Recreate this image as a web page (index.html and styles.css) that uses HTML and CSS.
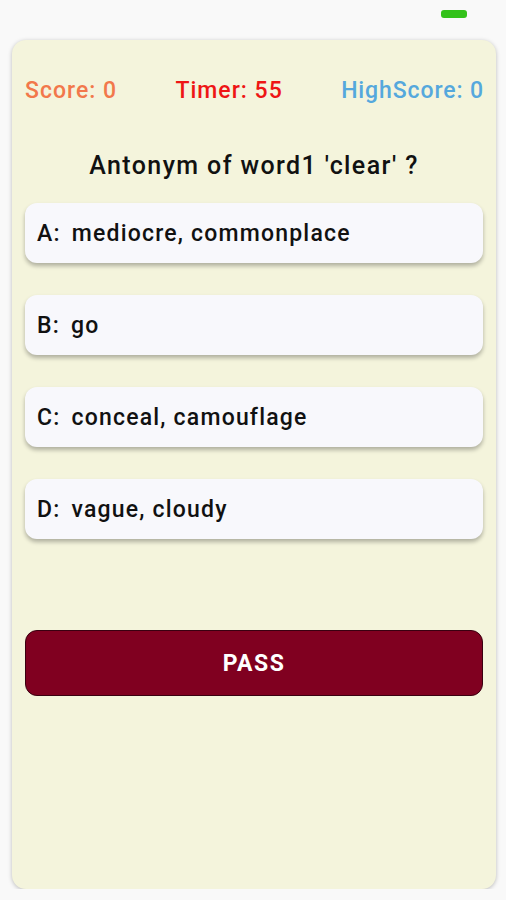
FILE: index.html
```html
<!DOCTYPE html>
<html lang="en">
<head>
    <meta charset="UTF-8">
    <meta name="viewport" content="width=device-width, initial-scale=1.0">
    <title>Antonym Quiz</title>
    <link rel="stylesheet" href="styles.css">
</head>
<body>
    <div class="status-bar">
        <span class="battery"></span>
    </div>

    <div class="card">
        <div class="score-row">
            <span class="score">Score: 0</span>
            <span class="timer">Timer: 55</span>
            <span class="high-score">HighScore: 0</span>
        </div>

        <h2 class="question">Antonym of word1 'clear' ?</h2>

        <div class="options">
            <button class="option"><span class="letter">A:</span>mediocre, commonplace</button>
            <button class="option"><span class="letter">B:</span>go</button>
            <button class="option"><span class="letter">C:</span>conceal, camouflage</button>
            <button class="option"><span class="letter">D:</span>vague, cloudy</button>
        </div>

        <button class="pass">PASS</button>
    </div>
</body>
</html>
```

FILE: styles.css
```css
body {
    font-family: Roboto, "Noto Sans", Arial, sans-serif;
    background-color: #f9f9f9;
    margin: 0;
    padding: 0;
}
.status-bar {
    height: 40px;
    display: flex;
    justify-content: flex-end;
    padding-right: 39px;
    box-sizing: border-box;
}
.battery {
    width: 26px;
    height: 8px;
    margin-top: 10px;
    border-radius: 3px;
    background-color: #33c21a;
}
.card {
    margin: 0 10px 0 12px;
    height: 849px;
    box-sizing: border-box;
    padding: 36px 13px 0;
    background-color: #f4f4dc;
    border-radius: 14px;
    box-shadow: 0 1px 4px rgba(0, 0, 0, 0.25);
}
.score-row {
    display: flex;
    justify-content: space-between;
    font-size: 23px;
    font-weight: 500;
    letter-spacing: 1px;
    line-height: 30px;
}
.score {
    color: #f2784b;
}
.timer {
    color: #ee1515;
}
.high-score {
    color: #55a8dd;
    letter-spacing: 0.9px;
    margin-right: -1px;
}
.question {
    margin: 45px 0 22px;
    font-size: 25px;
    font-weight: 500;
    letter-spacing: 1.4px;
    line-height: 30px;
    text-align: center;
    color: #111;
}
.options {
    display: flex;
    flex-direction: column;
    gap: 32px;
}
.option {
    height: 60px;
    display: flex;
    align-items: center;
    padding: 0 12px;
    border: none;
    border-radius: 12px;
    background-color: #f8f8fc;
    box-shadow: 0 3px 4px rgba(0, 0, 0, 0.28);
    font-family: inherit;
    font-size: 23px;
    font-weight: 500;
    letter-spacing: 1.2px;
    color: #111;
    text-align: left;
}
.letter {
    margin-right: 11px;
}
.pass {
    display: block;
    width: 100%;
    height: 66px;
    margin-top: 91px;
    border: 1px solid #3a0010;
    border-radius: 12px;
    background-color: #800020;
    color: #fff;
    font-family: inherit;
    font-size: 23px;
    font-weight: 700;
    letter-spacing: 1.5px;
}
```
